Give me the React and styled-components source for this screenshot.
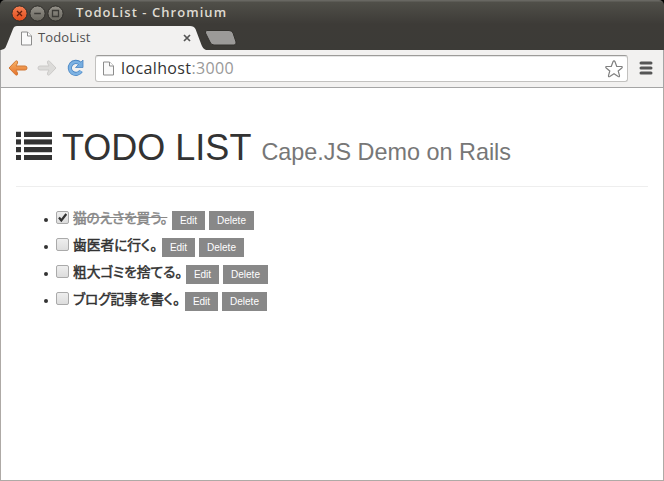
import React from "react";
import styled, { createGlobalStyle } from "styled-components";

const GlobalStyle = createGlobalStyle`
  * { box-sizing: border-box; }
  body { margin: 0; background: #000; overflow: hidden; }
`;

const Window = styled.div`
  width: 664px;
  height: 481px;
  display: flex;
  flex-direction: column;
  border-radius: 5px 5px 0 0;
  overflow: hidden;
  background: linear-gradient(#686762 0, #686762 1px, #504f49 2px, #3d3b37 24px, #3c3b37 50px);
`;

const TitleBar = styled.header`
  height: 26px;
  display: flex;
  align-items: center;
  padding-left: 11px;
`;

const WindowButton = styled.svg`
  width: 18px;
  height: 18px;
  flex: none;
  margin-top: 1px;
`;

const WindowTitle = styled.div`
  margin-left: 11px;
  margin-top: -2px;
  font: 600 13px/18px "Open Sans", sans-serif;
  letter-spacing: 1.05px;
  color: #dfdbd2;
  white-space: nowrap;
`;

const TabStrip = styled.div`
  height: 24px;
  display: flex;
`;

const Tab = styled.div`
  width: 206px;
  height: 24px;
  flex: none;
  display: grid;
`;

const TabShape = styled.svg`
  grid-area: 1 / 1;
  width: 206px;
  height: 24px;
`;

const TabContent = styled.div`
  grid-area: 1 / 1;
  display: flex;
  align-items: center;
  padding: 0 15px 0 20px;
`;

const TabTitle = styled.span`
  flex: 1;
  margin: -2px 0 0 5px;
  font: 13px/18px "Open Sans", sans-serif;
  letter-spacing: 0.1px;
  color: #505050;
`;

const NewTab = styled.svg`
  width: 33px;
  height: 16px;
  margin: 4px 0 0 -2px;
`;

const Toolbar = styled.nav`
  height: 38px;
  flex: none;
  display: flex;
  align-items: center;
  padding: 0 10px 0 7px;
  background: #f2f1f0;
  border: solid #a5a5a5;
  border-width: 0 1px 1px;
`;

const NavIcon = styled.svg`
  width: 20px;
  height: 18px;
  flex: none;
  margin: -1px ${(p) => p.$gap}px 0 0;
`;

const AddressBar = styled.div`
  flex: 1;
  height: 27px;
  display: flex;
  align-items: center;
  padding: 0 3px 0 6px;
  background: #fff;
  border: 1px solid #c2c1bf;
  border-top-color: #9c9b99;
  border-radius: 3px;
  box-shadow: inset 0 1px 0 #e6e6e6;
`;

const Url = styled.span`
  flex: 1;
  margin: -1px 0 0 6px;
  font: 16px/24px "Open Sans", sans-serif;
  letter-spacing: 0.38px;
  color: #333;
`;

const Port = styled.span`
  color: #999;
`;

const PageIcon = styled.svg`
  width: 13px;
  height: 15px;
  flex: none;
`;

const StarIcon = styled.svg`
  width: 20px;
  height: 20px;
`;

const MenuIcon = styled.svg`
  width: 14px;
  height: 14px;
  margin: -1px 0 0 11px;
`;

const Page = styled.main`
  flex: 1;
  padding: 40px 15px 0;
  background: #fff;
  border: solid #aeaaa6;
  border-width: 0 1px 1px;
  font-family: "Liberation Sans", Arial, sans-serif;
  color: #333;
`;

const PageHeader = styled.h1`
  height: 59px;
  margin: 0 0 20px;
  display: flex;
  align-items: baseline;
  border-bottom: 1px solid #eee;
  font-size: 36px;
  font-weight: 400;
  line-height: 40px;
  white-space: nowrap;
`;

const ListIcon = styled.svg`
  width: 36px;
  height: 29px;
  margin-right: 10px;
`;

const Subtitle = styled.small`
  margin-left: 10px;
  font-size: 23.4px;
  color: #777;
`;

const TodoList = styled.ul`
  margin: 0;
  padding: 0 0 0 25px;
  list-style: none;
`;

const TodoItem = styled.li`
  height: 27px;
  display: flex;
  align-items: center;
  white-space: nowrap;
`;

const Bullet = styled.span`
  width: 4px;
  height: 4px;
  margin: -1px 8px 0 3px;
  border-radius: 50%;
  background: #333;
`;

const CheckBox = styled.svg`
  width: 13px;
  height: 13px;
  margin: -7px 4px 0 0;
`;

const TodoText = styled.span`
  width: ${(p) => p.$width}px;
  margin: -7px 4px 0 0;
  font: 400 13.7px/20px "Noto Sans CJK JP", sans-serif;
  -webkit-text-stroke: 0.5px;
  font-feature-settings: "palt";
  letter-spacing: ${(p) => p.$spacing}px;
  color: ${(p) => (p.$done ? "#888" : "#333")};
  text-decoration: ${(p) => (p.$done ? "line-through 1px" : "none")};
`;

const ActionButton = styled.button`
  width: ${(p) => p.$width}px;
  height: 19px;
  margin: 0 4px 0 0;
  padding: 0;
  border: 0;
  background: #888;
  color: #fff;
  font: 10px/19px "Liberation Sans", Arial, sans-serif;
`;

const todos = [
  { text: "猫のえさを買う。", done: true, width: 95, spacing: -0.1 },
  { text: "歯医者に行く。", done: false, width: 85, spacing: 0 },
  { text: "粗大ゴミを捨てる。", done: false, width: 109, spacing: -0.05 },
  { text: "ブログ記事を書く。", done: false, width: 108, spacing: -0.1 },
];

function Control({ kind }) {
  const close = kind === "close";
  return (
    <WindowButton viewBox="0 0 18 18">
      <defs>
        <linearGradient id={kind} x1="0" y1="0" x2="0" y2="1">
          <stop stopColor={close ? "#f58053" : "#95928a"} />
          <stop offset="1" stopColor={close ? "#e24b1b" : "#69675f"} />
        </linearGradient>
      </defs>
      <circle cx="8.5" cy="8.5" r="7.6" fill={`url(#${kind})`} stroke="#302f2b" />
      <path
        d={close ? "M6 6l5 5m0-5l-5 5" : kind === "minimize" ? "M5.2 8.5h6.6" : "M5.5 5.5h6v6h-6z"}
        fill="none"
        stroke={close ? "#64200d" : "#3c3b37"}
        strokeWidth="1.3"
      />
    </WindowButton>
  );
}

function Document() {
  return (
    <PageIcon viewBox="0 0 13 15">
      <path d="M1.5 1h6l4 4v9h-10z" fill="#fafafa" stroke="#8c8c8c" />
      <path d="M7.5 1v4h4" fill="#fff" stroke="#8c8c8c" />
    </PageIcon>
  );
}

function Check({ checked }) {
  return (
    <CheckBox viewBox="0 0 13 13">
      <defs>
        <linearGradient id="box" x1="0" y1="0" x2="0" y2="1">
          <stop stopColor="#efefef" />
          <stop offset="1" stopColor="#dcdcdc" />
        </linearGradient>
      </defs>
      <rect x=".5" y=".5" width="12" height="12" rx="1.5" fill="url(#box)" stroke="#aaa" />
      {checked && <path d="M3 6.5l2.3 3L10.3 3" fill="none" stroke="#333" strokeWidth="2.2" />}
    </CheckBox>
  );
}

export default function App() {
  return (
    <>
      <GlobalStyle />
      <Window>
        <TitleBar>
          <Control kind="close" />
          <Control kind="minimize" />
          <Control kind="maximize" />
          <WindowTitle>TodoList - Chromium</WindowTitle>
        </TitleBar>
        <TabStrip>
          <Tab>
            <TabShape viewBox="0 0 206 24">
              <path d="M1 24C5 23 5.500 22 7 18L13 3Q14 0 17 0H190Q194 0 195.500 3L201.500 19Q203 23 206 24z" fill="#f2f1f0" />
            </TabShape>
            <TabContent>
              <Document />
              <TabTitle>TodoList</TabTitle>
              <svg width="8" height="8" viewBox="0 0 8 8">
                <path d="M1 1l6 6m0-6L1 7" stroke="#555" strokeWidth="1.7" />
              </svg>
            </TabContent>
          </Tab>
          <NewTab viewBox="0 0 33 16">
            <path d="M3 .5H25Q28 .5 29 3L32 12Q32.500 15 30 15H10Q7 15 6 12L1.500 3Q1 .5 3 .5z" fill="#9b9a98" stroke="#33322e" />
          </NewTab>
        </TabStrip>
        <Toolbar>
          <NavIcon viewBox="0 0 20 18" $gap={9}>
            <defs>
              <linearGradient id="back" x1="0" y1="0" x2="0" y2="1">
                <stop stopColor="#f8b568" />
                <stop offset="1" stopColor="#e5702a" />
              </linearGradient>
            </defs>
            <path d="M1 9L7.500 2.200Q10 1 9.500 4L8 7H17Q19 7 19 9T17 11H8L9.500 14Q10 17 7.500 15.800z" fill="url(#back)" stroke="#d07837" strokeWidth="1" />
          </NavIcon>
          <NavIcon viewBox="0 0 20 18" $gap={9}>
            <path d="M19 9L12.500 2.200Q10 1 10.500 4L12 7H3Q1 7 1 9T3 11H12L10.500 14Q10 17 12.500 15.800z" fill="#dcdbd9" stroke="#cbcac8" strokeWidth="1" />
          </NavIcon>
          <NavIcon viewBox="0 0 20 18" $gap={9}>
            <path d="M14 4.600A6 6 0 1 0 15 12" fill="none" stroke="#4c87c3" strokeWidth="4.200" />
            <path d="M17 1V8.500H9.500z" fill="#76addf" stroke="#4c87c3" strokeWidth=".8" />
            <path d="M14 4.600A6 6 0 1 0 15 12" fill="none" stroke="#7db2e3" strokeWidth="2.600" />
          </NavIcon>
          <AddressBar>
            <Document />
            <Url>localhost<Port>:3000</Port></Url>
            <StarIcon viewBox="0 0 20 20">
              <path d="M10 1.800Q10.700 1.800 11 2.800L12.700 7.300L17.400 7.500Q19 7.800 17.800 9L14.200 12L15.500 16.500Q15.700 18.300 14.200 17.500L10 14.800L5.800 17.500Q4.300 18.300 4.500 16.500L5.800 12L2.200 9Q1 7.800 2.600 7.500L7.300 7.300L9 2.800Q9.300 1.800 10 1.800z" fill="none" stroke="#808080" strokeWidth="1.200" />
            </StarIcon>
          </AddressBar>
          <MenuIcon viewBox="0 0 14 14">
            <path d="M2 2h10M2 7h10M2 12h10" stroke="#555" strokeWidth="3" strokeLinecap="round" />
          </MenuIcon>
        </Toolbar>
        <Page>
          <PageHeader>
            <ListIcon viewBox="0 0 36 29">
              <path d="M0 0h36v2H0zM0 8h36v1H0zM0 20h36v2H0z" fill="#ccc" />
              <path d="M5 0h3v29h-3z" fill="#fff" />
              <path d="M0 1h5v5H0zm8 0h28v5H8zM0 8.500h5v5H0zm8 0h28v5H8zM0 16h5v5H0zm8 0h28v5H8zM0 24h5v5H0zm8 0h28v5H8z" fill="#333" />
            </ListIcon>
            TODO LIST
            <Subtitle>Cape.JS Demo on Rails</Subtitle>
          </PageHeader>
          <TodoList>
            {todos.map((todo) => (
              <TodoItem key={todo.text}>
                <Bullet />
                <Check checked={todo.done} />
                <TodoText $done={todo.done} $width={todo.width} $spacing={todo.spacing}>{todo.text}</TodoText>
                <ActionButton $width={33}>Edit</ActionButton>
                <ActionButton $width={45}>Delete</ActionButton>
              </TodoItem>
            ))}
          </TodoList>
        </Page>
      </Window>
    </>
  );
}
